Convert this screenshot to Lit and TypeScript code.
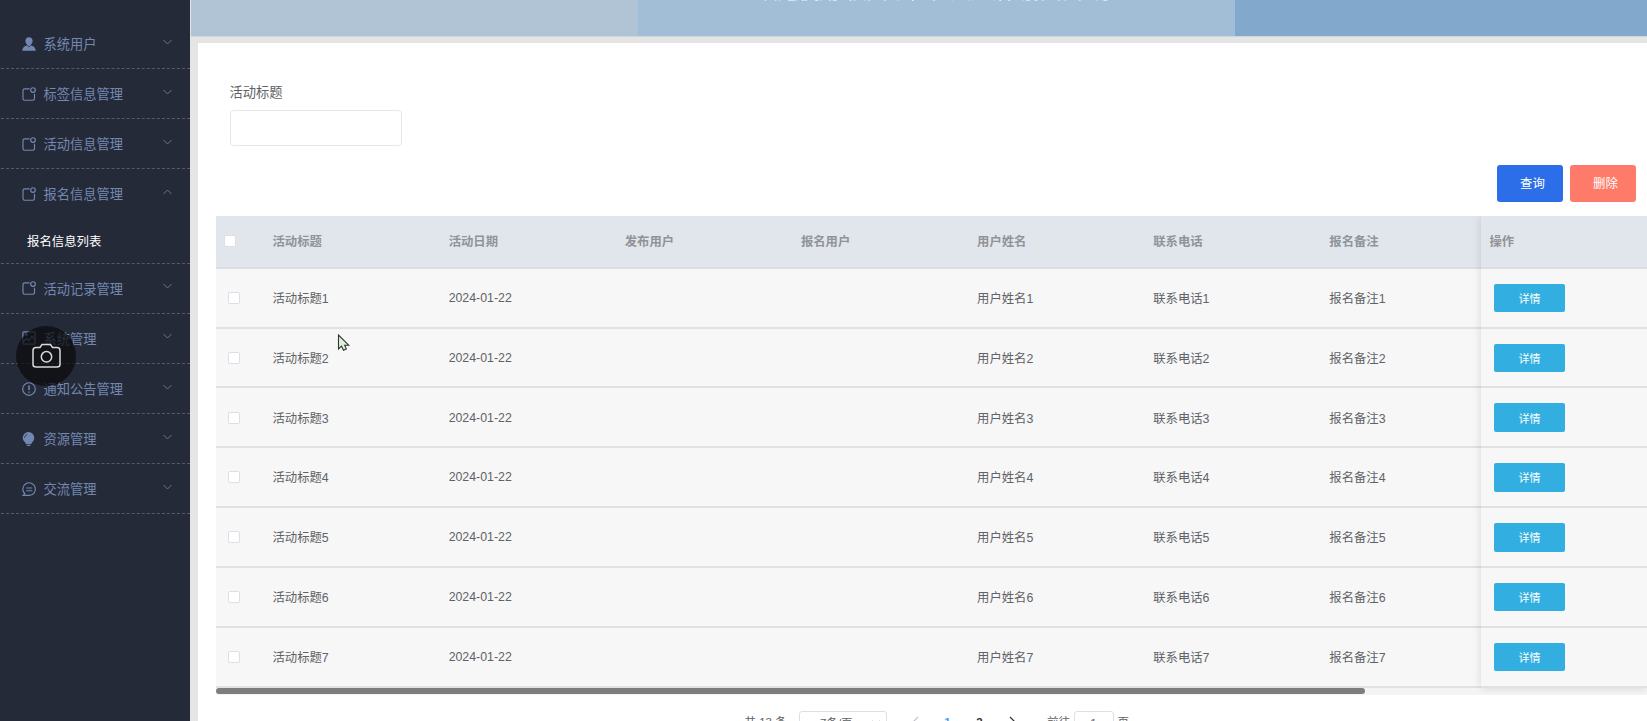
import { LitElement, html, css, svg } from "lit";
import { customElement } from "lit/decorators.js";

const I: Record<string, any> = {
  user: svg`<path fill="currentColor" stroke="none" d="M7 .2c2.200 0 3.600 1.500 3.600 3.600 0 1.600-.7 3-1.700 3.700v.8c2.700.7 4.600 2.300 4.900 5.500H.2c.3-3.200 2.200-4.800 4.900-5.500v-.8C4.100 6.800 3.400 5.400 3.400 3.800 3.400 1.700 4.800.2 7 .2z"/><path d="M5 8.200l2 1.800 2-1.800" fill="none" stroke="#252a38" stroke-width=".7"/>`,
  note: svg`<path d="M7.600 1.800H2.700Q1 1.800 1 3.500V11.500Q1 13.200 2.700 13.200H10.800Q12.500 13.200 12.500 11.500V6.700"/><circle cx="11" cy="3" r="2.300"/>`,
  pic: svg`<rect x=".9" y=".9" width="12.200" height="12.200" rx="1"/><path d="M1 11l3.500-3.500 2.500 2 3-4 3 3.500"/><circle cx="4.500" cy="4" r=".9"/>`,
  warn: svg`<circle cx="7" cy="7" r="6.300"/><path stroke-width="1.500" d="M7 3.400v4.700M7 9.400v1.400"/>`,
  bulb: svg`<path fill="currentColor" stroke="none" d="M6.500 0a5.800 5.800 0 0 1 5.800 5.800c0 2.200-1.100 3.700-2.500 4.800L9.300 12.200H3.900l-.5-1.600C2 9.500.7 8 .7 5.800A5.800 5.800 0 0 1 6.500 0zM4.800 12.900h3.500v1.200H4.800z"/><path d="M2.600 5.800c.1-1.700 1-2.800 2.700-3.300" fill="none" stroke="#252a38" stroke-width=".8"/>`,
  chat: svg`<path d="M2.800 11.700A6.300 6.300 0 1 1 7.200 13.400H1.200Z"/><path d="M4.200 6h6M4.200 8.700h6"/>`,
};

const MENU: [string, string, string?][] = [
  ["user", "系统用户"], ["note", "标签信息管理"], ["note", "活动信息管理"],
  ["note", "报名信息管理", "报名信息列表"], ["note", "活动记录管理"], ["pic", "系统管理"],
  ["warn", "通知公告管理"], ["bulb", "资源管理"], ["chat", "交流管理"],
];
const HEAD = ["活动标题", "活动日期", "发布用户", "报名用户", "用户姓名", "联系电话", "报名备注"];

@customElement("side-menu")
export class SideMenu extends LitElement {
  static styles = css`
    :host { display: block; width: 190px; flex: none; height: 721px; box-sizing: border-box; padding-top: 19px; background: #252a38; color: #7388b0; font-size: 13.250px; }
    .item { border-bottom: 1px dashed #5a5a5e; box-sizing: border-box; margin-left: 1px; }
    .top { display: flex; align-items: center; height: 49.080px; padding: 0 18.500px 0 21px; }
    .icon { width: 14px; height: 14px; margin-right: 7.500px; fill: none; stroke: currentColor; stroke-width: 1.150; flex: none; overflow: visible; }
    .label { flex: 1; }
    .arrow { width: 9px; height: 6px; fill: none; stroke: #64779c; margin-bottom: 4px; }
    .sub { height: 44.500px; line-height: 49px; padding-left: 26px; color: #fff; font-size: 12.400px; }
  `;
  render() {
    return MENU.map(([i, t, s]) => html`<div class="item"><div class="top">
      <svg class="icon" viewBox="0 0 14 14">${I[i]}</svg><span class="label">${t}</span>
      <svg class="arrow" viewBox="0 0 9 6"><path d=${s ? "M.5 5L4.500 1l4 4" : "M.5 1l4 4 4-4"} /></svg>
    </div>${s ? html`<div class="sub">${s}</div>` : ""}</div>`);
  }
}

@customElement("data-table")
export class DataTable extends LitElement {
  static styles = css`
    :host { display: block; overflow: hidden; }
    .wrap { display: flex; }
    .main { width: 1265.500px; flex: none; }
    .fixed { flex: 1; box-shadow: 0 0 9px rgba(0,0,0,.13); z-index: 1; }
    .row { display: grid; grid-template-columns: 48.500px repeat(7, 176.150px); align-items: center; height: 59.830px; box-sizing: border-box; background: #f7f7f7; border-bottom: 2px solid #dfe2e5; font-size: 12.350px; color: #606266; overflow: hidden; padding-top: .6px; }
    .head { height: 52.800px; background: #e1e6ec; color: #909399; font-weight: 700; border-bottom: 2px solid #dadfe6; padding-top: 0; }
    .cell { padding-left: 8.500px; white-space: nowrap; }
    .check { width: 12px; height: 12px; box-sizing: border-box; border: 1px solid #dcdfe6; border-radius: 2px; background: #fff; margin-left: 12.500px; }
    .head .check { margin-left: 8.500px; }
    .op { display: flex; }
    .btn { width: 71px; height: 28.500px; margin-left: 13px; border-radius: 2px; background: #32aee0; color: #fff; font-size: 11px; display: flex; align-items: center; justify-content: center; }
    .bar { height: 7px; background: #f4f4f7; }
    .thumb { height: 6.500px; width: 1149.500px; border-radius: 4px; background: #7c7e7d; }
  `;
  render() {
    const rows = [1, 2, 3, 4, 5, 6, 7];
    return html`<div class="wrap"><div class="main">
      <div class="row head"><i class="check"></i>${HEAD.map((h) => html`<span class="cell">${h}</span>`)}</div>
      ${rows.map((n) => html`<div class="row"><i class="check"></i>${["活动标题" + n, "2024-01-22", "", "", "用户姓名" + n, "联系电话" + n, "报名备注" + n].map((c) => html`<span class="cell">${c}</span>`)}</div>`)}
    </div><div class="fixed">
      <div class="row head op"><span class="cell">操作</span></div>
      ${rows.map(() => html`<div class="row op"><span class="btn">详情</span></div>`)}
    </div></div><div class="bar"><div class="thumb"></div></div>`;
  }
}

@customElement("app-root")
export class AppRoot extends LitElement {
  static styles = css`
    :host { display: flex; position: relative; width: 1647px; height: 721px; overflow: hidden; background: #e5e5e5; font-family: "Liberation Sans", "Noto Sans CJK SC", sans-serif; color: #606266; }
    .page { flex: 1; min-width: 0; padding-left: 1px; }
    .banner { display: grid; grid-template-columns: 447px 597px 1fr; height: 36px; border-bottom: 1px solid #cdd5dc; overflow: hidden; }
    .b1 { background: #b0c4d5; } .b2 { background: #a2bed6; display: flex; justify-content: center; } .b3 { background: #82a8cb; }
    .title { color: #fff; font-size: 20.800px; line-height: 24px; height: 24px; margin-top: -20px; white-space: nowrap; }
    .card { background: #fff; margin: 6px 0 0 7px; height: 678px; padding: 38px 0 0 17.500px; box-sizing: border-box; }
    .field { padding-left: 14px; }
    .label { font-size: 13.250px; line-height: 24px; }
    .input { width: 172.500px; height: 36px; box-sizing: border-box; border: 1px solid #e6e7ea; border-radius: 4px; margin-top: 5px; }
    .actions { display: flex; justify-content: flex-end; gap: 7px; padding: 19px 11px 0 0; margin-bottom: 14px; }
    .btn { width: 66px; height: 37px; border-radius: 3px; color: #fff; font-size: 12.400px; display: flex; align-items: center; justify-content: center; box-sizing: border-box; padding: 0 0 1px 5px; }
    .query { background: #2c6ee7; } .del { background: #ff7b69; }
    .pager { display: flex; font-size: 11.500px; line-height: 22px; height: 26px; padding-left: 529px; margin-top: 16.500px; white-space: nowrap; }
    .pager span { flex: none; box-sizing: border-box; }
    .total { width: 54.500px; }
    .size { width: 88px; border: 1px solid #dcdfe6; border-radius: 3px; padding: 0 6px 0 20px; display: flex; justify-content: space-between; }
    .size svg { margin-top: 8px; }
    .pg { width: 32px; text-align: center; font-weight: 700; color: #303133; }
    .on { color: #409eff; }
    .chev { width: 6px; height: 10px; fill: none; stroke: #303133; stroke-width: 1.200; }
    .off { stroke: #c0c4cc; }
    .first { margin-left: 12.500px; }
    .goto { margin-left: 19.500px; width: 26.500px; }
    .num { width: 40px; border: 1px solid #dcdfe6; border-radius: 3px; text-align: center; margin-right: 4px; }
    .shot { position: absolute; left: 16px; top: 326px; width: 60px; height: 60px; border-radius: 50%; background: rgba(10,11,13,.72); }
    .shot svg { position: absolute; left: 16px; top: 17px; }
    .cursor { position: absolute; left: 337px; top: 334px; }
  `;
  render() {
    return html`<side-menu></side-menu>
    <div class="page">
      <div class="banner"><div class="b1"></div><div class="b2"><span class="title">欢迎使用 校园个性化兴趣活动推荐程序</span></div><div class="b3"></div></div>
      <div class="card">
        <div class="field"><div class="label">活动标题</div><div class="input"></div></div>
        <div class="actions"><span class="btn query">查询</span><span class="btn del">删除</span></div>
        <data-table></data-table>
        <div class="pager">
          <span class="total">共 13 条</span>
          <span class="size">7条/页<svg width="8" height="5" fill="none" stroke="#c0c4cc"><path d="M.5.5l3.500 3.500 3.500-3.500" /></svg></span>
          <span class="pg first"><svg class="chev off" viewBox="0 0 6 10"><path d="M5 1L1 5l4 4" /></svg></span>
          <span class="pg on">1</span><span class="pg">2</span>
          <span class="pg"><svg class="chev" viewBox="0 0 6 10"><path d="M1 1l4 4-4 4" /></svg></span>
          <span class="goto">前往</span><span class="num">1</span><span>页</span>
        </div>
      </div>
    </div>
    <div class="shot"><svg width="30" height="26" viewBox="0 0 30 26" fill="none" stroke="#d9d9d9" stroke-width="1.500"><path d="M4 4.500H8L10 1.500H18.500L20.500 4.500H25Q28 4.500 28 7.500V21.500Q28 24 25 24H4Q1 24 1 21.500V7.500Q1 4.500 4 4.500Z"/><circle cx="14.500" cy="13.800" r="5.200"/></svg></div>
    <svg class="cursor" width="14" height="18" viewBox="0 0 14 18"><path d="M1.500 1v14l3-2.800 2 4 2.800-1.300-1.600-3.700h4z" fill="#d8f5d5" stroke="#333" stroke-width="1.100"/></svg>`;
  }
}
